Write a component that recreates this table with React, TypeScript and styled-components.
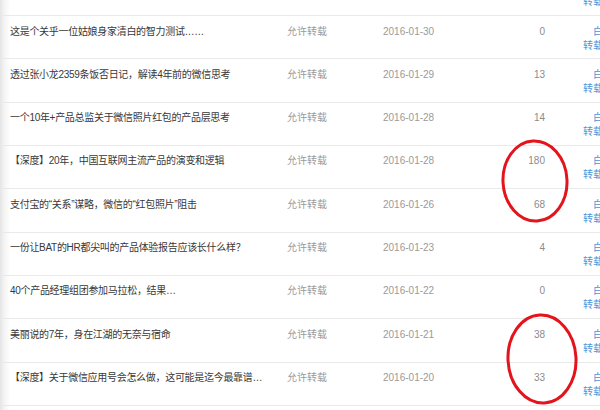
import React from "react";
import styled, { createGlobalStyle } from "styled-components";

const Global = createGlobalStyle`
  html, body { margin: 0; padding: 0; }
  body {
    width: 600px;
    height: 410px;
    overflow: hidden;
    background: linear-gradient(to right, #e4e4e4 0px, #f3f3f3 4px, #ffffff 10px);
    font-family: "Liberation Sans", "Noto Sans CJK SC", sans-serif;
    font-size: 10px;
  }
`;

const Page = styled.div`
  position: relative;
  width: 600px;
  height: 410px;
  overflow: hidden;
`;

const List = styled.div`
  margin-top: -27.33px;
  display: flex;
  flex-direction: column;
`;

const Row = styled.div`
  height: 42.33px;
  border-bottom: 1px solid #e9e9e9;
  display: grid;
  grid-template-columns: 277px 96px 110px 52px 38px 60px;
  padding-left: 10px;
  box-sizing: content-box;
  line-height: 14px;
  white-space: nowrap;
`;

const Title = styled.div`
  padding-top: 8.5px;
  color: #383838;
  letter-spacing: -0.3px;
`;

const Gray = styled.div`
  padding-top: 8.5px;
  color: #9a9a9a;
`;

const Count = styled.div`
  padding-top: 8.5px;
  color: #8c8c8c;
  text-align: right;
`;

const Action = styled.div`
  padding-top: 8.5px;
  color: #4b95d8;
  display: flex;
  flex-direction: column;
  align-items: flex-start;
`;

const ActionTop = styled.span`
  padding-left: 10px;
`;

const Overlay = styled.svg`
  position: absolute;
  left: 0;
  top: 0;
  pointer-events: none;
`;

const rows = [
  { t: "", d: "", n: "", hide: true },
  { t: "这是个关乎一位姑娘身家清白的智力测试……", d: "2016-01-30", n: "0" },
  { t: "透过张小龙2359条饭否日记，解读4年前的微信思考", d: "2016-01-29", n: "13" },
  { t: "一个10年+产品总监关于微信照片红包的产品层思考", d: "2016-01-28", n: "14" },
  { t: "【深度】20年，中国互联网主流产品的演变和逻辑", d: "2016-01-28", n: "180" },
  { t: "支付宝的“关系”谋略，微信的“红包照片”阻击", d: "2016-01-26", n: "68" },
  { t: "一份让BAT的HR都尖叫的产品体验报告应该长什么样？", d: "2016-01-23", n: "4" },
  { t: "40个产品经理组团参加马拉松，结果…", d: "2016-01-22", n: "0" },
  { t: "美丽说的7年，身在江湖的无奈与宿命", d: "2016-01-21", n: "38" },
  { t: "【深度】关于微信应用号会怎么做，这可能是迄今最靠谱…", d: "2016-01-20", n: "33" },
];

export default function App() {
  return (
    <Page>
      <Global />
      <List>
        {rows.map((r, i) => (
          <Row key={i}>
            <Title>{r.t}</Title>
            <Gray>{r.hide ? "" : "允许转载"}</Gray>
            <Gray>{r.d}</Gray>
            <Count>{r.n}</Count>
            <div />
            <Action>
              <ActionTop>白名单</ActionTop>
              <span>转载设置</span>
            </Action>
          </Row>
        ))}
      </List>
      <Overlay width="600" height="410" viewBox="0 0 600 410">
        <ellipse cx="535" cy="181" rx="32" ry="40" fill="none" stroke="#e3141b" strokeWidth="3" transform="rotate(-3 535 181)" />
        <ellipse cx="542" cy="359" rx="34" ry="44" fill="none" stroke="#e3141b" strokeWidth="3" transform="rotate(-3 542 359)" />
      </Overlay>
    </Page>
  );
}
